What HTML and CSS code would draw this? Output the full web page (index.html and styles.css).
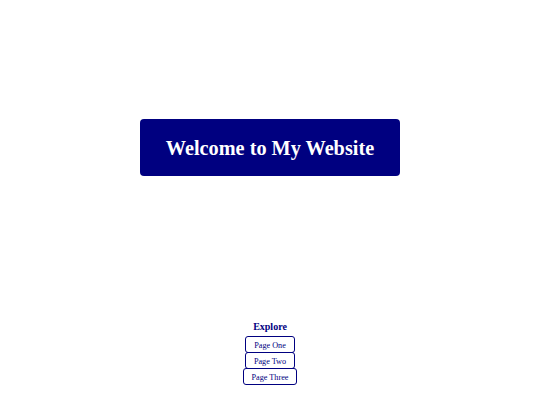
FILE: index.html
```html
<!DOCTYPE html>
<html>
<head>
<meta charset="utf-8">
<link rel="stylesheet" href="styles.css">
</head>
<body>
<div class="page">
  <header class="hero">
    <h1 class="hero-title">Welcome to My Website</h1>
  </header>
  <nav class="explore">
    <h2 class="explore-title">Explore</h2>
    <div class="links">
      <a class="link" href="#">Page One</a>
      <a class="link" href="#">Page Two</a>
      <a class="link" href="#">Page Three</a>
    </div>
  </nav>
</div>
</body>
</html>
```

FILE: styles.css
```css
html, body {
  margin: 0;
  padding: 0;
  background: #ffffff;
}
body {
  font-family: "Liberation Serif", "Times New Roman", serif;
  color: #000080;
}
.page {
  width: 540px;
  height: 405px;
  display: flex;
  flex-direction: column;
  align-items: center;
  padding-top: 119px;
  box-sizing: border-box;
}
.hero {
  width: 260px;
  height: 57px;
  background: #000080;
  border-radius: 4px;
  display: flex;
  align-items: center;
  justify-content: center;
}
.hero-title {
  margin: 0;
  font-size: 20.25px;
  font-weight: bold;
  color: #ffffff;
  padding-top: 1px;
}
.explore {
  margin-top: 144px;
  display: flex;
  flex-direction: column;
  align-items: center;
}
.explore-title {
  margin: 0;
  font-size: 10px;
  line-height: 14px;
  font-weight: bold;
  color: #000080;
}
.links {
  display: flex;
  flex-direction: column;
  align-items: center;
  margin-top: 2px;
}
.link {
  display: block;
  font-size: 8.2px;
  line-height: 9px;
  padding: 4px 8px 2px;
  border: 1px solid #000080;
  border-radius: 3px;
  color: #000080;
  text-decoration: none;
}
.link + .link {
  margin-top: -1px;
}
```
